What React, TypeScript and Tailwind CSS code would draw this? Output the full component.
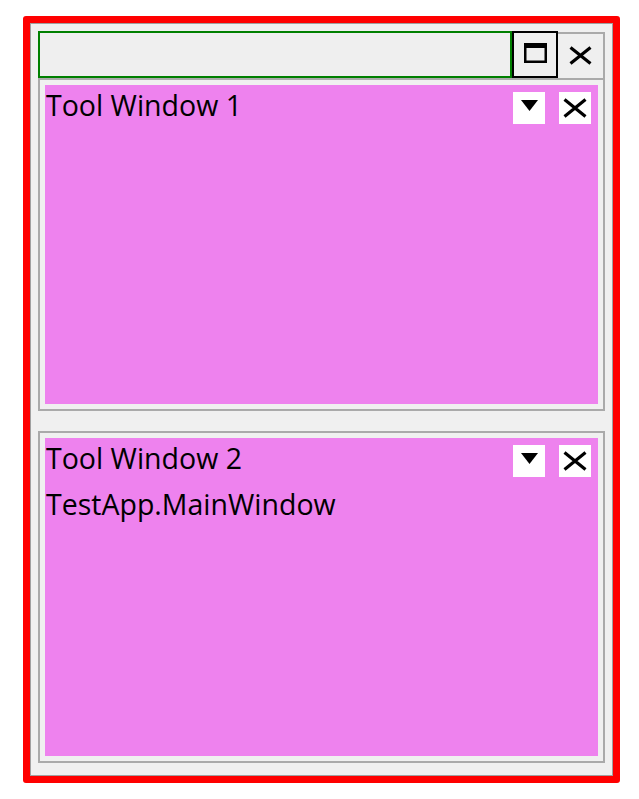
import type { ReactNode } from 'react';

function CloseGlyph({ w = 24, h = 20 }: { w?: number; h?: number }) {
  return (
    <svg width={w} height={h} viewBox={`0 0 ${w} ${h}`} fill="none">
      <path d={`M1.5 1.5 L${w - 1.5} ${h - 1.5} M${w - 1.5} 1.5 L1.5 ${h - 1.5}`} stroke="#000" strokeWidth="3.2" />
    </svg>
  );
}

function Panel({ title, height, children }: { title: string; height: string; children?: ReactNode }) {
  return (
    <div className={`${height} flex border-2 border-[#aaaaaa] p-[5px]`}>
      <div className="flex flex-1 flex-col bg-[#ee82ee]">
        <div className="flex items-start justify-between">
          <span className="ml-px mt-[6px] text-[28.5px] leading-none text-black">{title}</span>
          <div className="flex gap-[14px] pr-[7px] pt-[7px]">
            <div className="flex h-8 w-8 items-center justify-center bg-white">
              <svg width="17" height="11" viewBox="0 0 17 11" className="-mt-[5px]">
                <path d="M0 0 H17 L8.5 11 Z" fill="#000" />
              </svg>
            </div>
            <div className="flex h-8 w-8 items-center justify-center bg-white">
              <CloseGlyph />
            </div>
          </div>
        </div>
        {children}
      </div>
    </div>
  );
}

export default function App() {
  return (
    <div className="h-[799px] w-[639px] bg-white pl-[23px] pt-4 font-['Open_Sans',sans-serif]">
      <div className="h-[767px] w-[597px] rounded-[3px] border-[7px] border-[#ff0000]">
        <div className="flex h-full flex-col border border-[#a0a0a0] bg-[#f0f0f0] p-[7px]">
          <div className="flex h-[47px]">
            <div className="flex-1 border-2 border-[#008000] bg-[#efefef]" />
            <div className="flex w-[46px] items-center justify-center border-2 border-black bg-[#efefef]">
              <svg width="23" height="20" viewBox="0 0 23 20" className="-mt-[3px]">
                <rect x="1.25" y="1.25" width="20.5" height="17.5" fill="none" stroke="#000" strokeWidth="2.5" />
                <rect x="1" y="1" width="21" height="4" fill="#000" />
              </svg>
            </div>
            <div className="mt-px flex w-[47px] items-center justify-center border-r-2 border-t-2 border-[#aaaaaa] bg-[#efefef]">
              <div className="-mt-[2px]">
                <CloseGlyph w={23} h={19} />
              </div>
            </div>
          </div>
          <Panel title="Tool Window 1" height="h-[333px]" />
          <div className="h-5" />
          <Panel title="Tool Window 2" height="h-[332px]">
            <span className="ml-px mt-[13px] text-[28.5px] leading-none text-black">TestApp.MainWindow</span>
          </Panel>
        </div>
      </div>
    </div>
  );
}
